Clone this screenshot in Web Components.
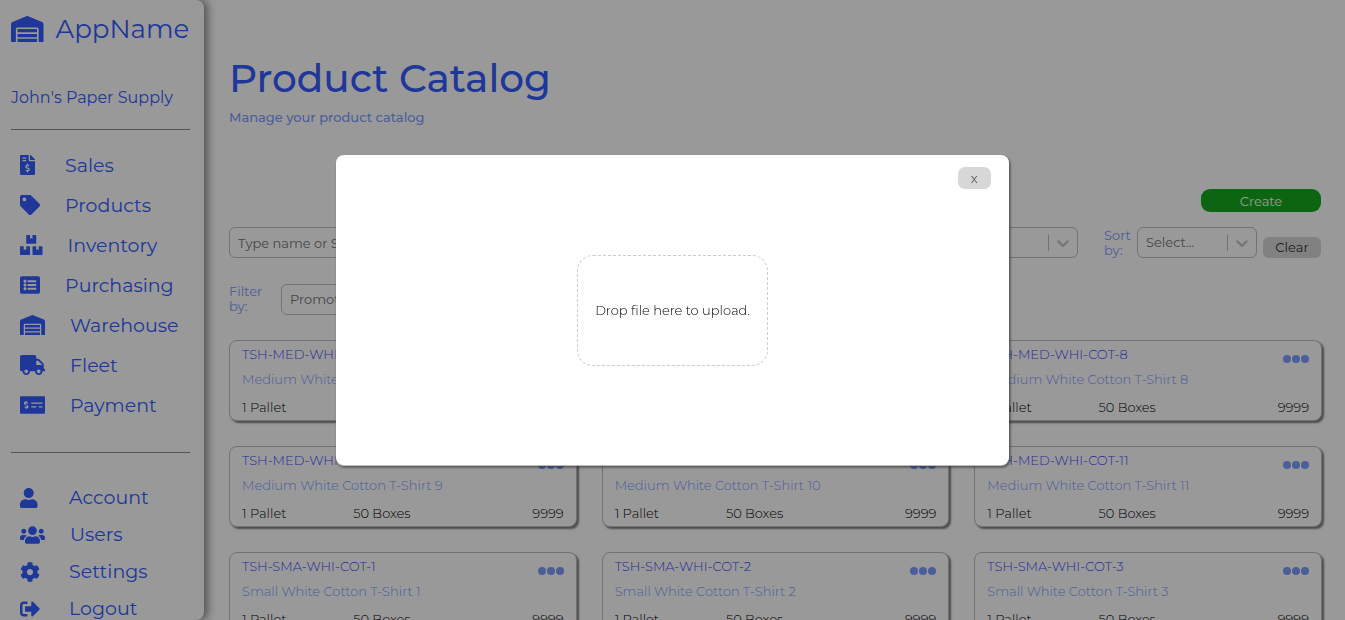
<!DOCTYPE html>
<html lang="en">
<head>
<meta charset="utf-8">
<meta name="viewport" content="width=device-width, initial-scale=1">
<title>Product Catalog</title>
<style>
  :root {
    --blue: #345dff;
    --blue-soft: #7f9dff;
    --link: #4048ff;
  }
  body {
    margin: 0;
    background: #fff;
    color: #000;
    font-family: Montserrat, Inter, "Open Sans", sans-serif;
    font-size: 13px;
    font-weight: 400;
  }
</style>
</head>
<body>
<app-shell>
  <side-bar slot="side" brand="AppName" company="John's Paper Supply">
    <nav-item icon="invoice">Sales</nav-item>
    <nav-item icon="tag">Products</nav-item>
    <nav-item icon="boxes">Inventory</nav-item>
    <nav-item icon="list">Purchasing</nav-item>
    <nav-item icon="warehouse">Warehouse</nav-item>
    <nav-item icon="truck">Fleet</nav-item>
    <nav-item icon="check">Payment</nav-item>
    <nav-item slot="account" icon="user">Account</nav-item>
    <nav-item slot="account" icon="users">Users</nav-item>
    <nav-item slot="account" icon="cog">Settings</nav-item>
    <nav-item slot="account" icon="logout">Logout</nav-item>
  </side-bar>
  <page-title heading="Product Catalog">Manage your product catalog</page-title>
  <catalog-tools></catalog-tools>
  <product-grid></product-grid>
</app-shell>
<upload-modal>Drop file here to upload.</upload-modal>

<script>
const ICONS = {
  user: [448, "M224 256c70.7 0 128-57.3 128-128S294.7 0 224 0 96 57.3 96 128s57.3 128 128 128zm89.6 32h-16.7c-22.2 10.2-46.9 16-72.9 16s-50.6-5.8-72.9-16h-16.7C60.2 288 0 348.2 0 422.4V464c0 26.5 21.5 48 48 48h352c26.5 0 48-21.5 48-48v-41.6c0-74.2-60.2-134.4-134.4-134.4z"],
  users: [640, "M96 224c35.3 0 64-28.7 64-64s-28.7-64-64-64-64 28.7-64 64 28.7 64 64 64zm448 0c35.3 0 64-28.7 64-64s-28.7-64-64-64-64 28.7-64 64 28.7 64 64 64zm32 32h-64c-17.6 0-33.5 7.1-45.1 18.6 40.3 22.1 68.9 62 75.1 109.4h66c17.7 0 32-14.3 32-32v-32c0-35.3-28.7-64-64-64zm-256 0c61.9 0 112-50.1 112-112S381.9 32 320 32 208 82.1 208 144s50.1 112 112 112zm76.8 32h-8.3c-20.8 10-43.9 16-68.5 16s-47.6-6-68.5-16h-8.3C179.6 288 128 339.6 128 403.2V432c0 26.5 21.5 48 48 48h288c26.5 0 48-21.5 48-48v-28.8c0-63.6-51.6-115.2-115.2-115.2zm-223.7-13.4C161.5 263.1 145.6 256 128 256H64c-35.3 0-64 28.7-64 64v32c0 17.7 14.3 32 32 32h65.9c6.3-47.4 34.9-87.3 75.2-109.4z"],
  cog: [512, "M487.4 315.7l-42.6-24.6c4.3-23.2 4.3-47 0-70.2l42.6-24.6c4.9-2.8 7.1-8.6 5.5-14-11.1-35.6-30-67.8-54.7-94.6-3.8-4.1-10-5.1-14.8-2.3L380.8 110c-17.9-15.4-38.5-27.3-60.8-35.1V25.8c0-5.6-3.9-10.5-9.4-11.7-36.7-8.2-74.3-7.8-109.2 0-5.5 1.2-9.4 6.1-9.4 11.7V75c-22.2 7.9-42.8 19.8-60.8 35.1L88.7 85.5c-4.9-2.8-11-1.9-14.8 2.3-24.7 26.7-43.6 58.9-54.7 94.6-1.7 5.4.6 11.2 5.5 14L67.3 221c-4.3 23.2-4.3 47 0 70.2l-42.6 24.6c-4.9 2.8-7.1 8.6-5.5 14 11.1 35.6 30 67.8 54.7 94.6 3.8 4.1 10 5.1 14.8 2.3l42.6-24.6c17.9 15.4 38.5 27.3 60.8 35.1v49.2c0 5.6 3.9 10.5 9.4 11.7 36.7 8.2 74.3 7.8 109.2 0 5.5-1.2 9.4-6.1 9.4-11.7v-49.2c22.2-7.9 42.8-19.8 60.8-35.1l42.6 24.6c4.9 2.8 11 1.9 14.8-2.3 24.7-26.7 43.6-58.9 54.7-94.6 1.5-5.5-.7-11.3-5.6-14.1zM256 336c-44.1 0-80-35.9-80-80s35.9-80 80-80 80 35.9 80 80-35.9 80-80 80z"],
  logout: [512, "M497 273L329 441c-15 15-41 4.5-41-17v-96H152c-13.3 0-24-10.7-24-24v-96c0-13.3 10.7-24 24-24h136V88c0-21.4 25.9-32 41-17l168 168c9.3 9.4 9.3 24.6 0 34zM192 436v-40c0-6.6-5.4-12-12-12H96c-17.7 0-32-14.3-32-32V160c0-17.7 14.3-32 32-32h84c6.6 0 12-5.4 12-12V76c0-6.6-5.4-12-12-12H96c-53 0-96 43-96 96v192c0 53 43 96 96 96h84c6.6 0 12-5.4 12-12z"],
  tag: [512, "M0 252.118V48C0 21.49 21.49 0 48 0h204.118a48 48 0 0 1 33.941 14.059l211.882 211.882c18.745 18.745 18.745 49.137 0 67.882L293.823 497.941c-18.745 18.745-49.137 18.745-67.882 0L14.059 286.059A48 48 0 0 1 0 252.118zM112 64c-26.51 0-48 21.49-48 48s21.49 48 48 48 48-21.49 48-48-21.49-48-48-48z"],
  warehouse: [640, "M504 352H136.4c-4.4 0-8 3.6-8 8l-.1 48c0 4.4 3.6 8 8 8H504c4.4 0 8-3.6 8-8v-48c0-4.4-3.6-8-8-8zm0 96H136.1c-4.4 0-8 3.6-8 8l-.1 48c0 4.4 3.6 8 8 8h368c4.4 0 8-3.6 8-8v-48c0-4.4-3.6-8-8-8zm0-192H136.6c-4.4 0-8 3.6-8 8l-.1 48c0 4.4 3.6 8 8 8H504c4.4 0 8-3.6 8-8v-48c0-4.4-3.6-8-8-8zm106.5-139L338.4 3.7a48.15 48.15 0 0 0-36.9 0L29.5 117C11.7 124.5 0 141.9 0 161.3V504c0 4.4 3.6 8 8 8h80c4.4 0 8-3.6 8-8V256c0-17.6 14.6-32 32.6-32h382.8c18 0 32.6 14.4 32.6 32v248c0 4.4 3.6 8 8 8h80c4.4 0 8-3.6 8-8V161.3c0-19.4-11.7-36.8-29.5-44.3z"],
  truck: [640, "M624 352h-16V243.9c0-12.7-5.1-24.9-14.1-33.9L494 110.1c-9-9-21.2-14.1-33.9-14.1H416V48c0-26.5-21.5-48-48-48H48C21.5 0 0 21.5 0 48v320c0 26.5 21.5 48 48 48h16c0 53 43 96 96 96s96-43 96-96h128c0 53 43 96 96 96s96-43 96-96h48c8.8 0 16-7.2 16-16v-32c0-8.8-7.2-16-16-16zM160 464c-26.5 0-48-21.5-48-48s21.5-48 48-48 48 21.5 48 48-21.5 48-48 48zm320 0c-26.5 0-48-21.5-48-48s21.5-48 48-48 48 21.5 48 48-21.5 48-48 48zm80-208H416V144h44.1l99.9 99.9V256z"],
  boxes: [576, "M560 288h-80v96l-32-21.3-32 21.3v-96h-80c-8.8 0-16 7.2-16 16v192c0 8.8 7.2 16 16 16h224c8.8 0 16-7.2 16-16V304c0-8.8-7.2-16-16-16zm-384-64h224c8.8 0 16-7.2 16-16V16c0-8.8-7.2-16-16-16h-80v96l-32-21.3L256 96V0h-80c-8.8 0-16 7.2-16 16v192c0 8.8 7.2 16 16 16zm64 64h-80v96l-32-21.3L96 384v-96H16c-8.8 0-16 7.2-16 16v192c0 8.8 7.2 16 16 16h224c8.8 0 16-7.2 16-16V304c0-8.8-7.2-16-16-16z"],
  list: [512, "M464 480H48c-26.51 0-48-21.49-48-48V80c0-26.51 21.49-48 48-48h416c26.51 0 48 21.49 48 48v352c0 26.51-21.49 48-48 48zM128 120c-22.091 0-40 17.909-40 40s17.909 40 40 40 40-17.909 40-40-17.909-40-40-40zm0 96c-22.091 0-40 17.909-40 40s17.909 40 40 40 40-17.909 40-40-17.909-40-40-40zm0 96c-22.091 0-40 17.909-40 40s17.909 40 40 40 40-17.909 40-40-17.909-40-40-40zm288-136v-32c0-6.627-5.373-12-12-12H204c-6.627 0-12 5.373-12 12v32c0 6.627 5.373 12 12 12h200c6.627 0 12-5.373 12-12zm0 96v-32c0-6.627-5.373-12-12-12H204c-6.627 0-12 5.373-12 12v32c0 6.627 5.373 12 12 12h200c6.627 0 12-5.373 12-12zm0 96v-32c0-6.627-5.373-12-12-12H204c-6.627 0-12 5.373-12 12v32c0 6.627 5.373 12 12 12h200c6.627 0 12-5.373 12-12z"],
  invoice: [384, "M377 105L279.1 7c-4.5-4.5-10.6-7-17-7H256v128h128v-6.1c0-6.3-2.5-12.4-7-16.9zm-153 31V0H24C10.7 0 0 10.7 0 24v464c0 13.3 10.7 24 24 24h336c13.3 0 24-10.7 24-24V160H248c-13.2 0-24-10.8-24-24zM64 72c0-4.42 3.58-8 8-8h80c4.42 0 8 3.58 8 8v16c0 4.42-3.58 8-8 8H72c-4.42 0-8-3.58-8-8V72zm0 80v-16c0-4.42 3.58-8 8-8h80c4.42 0 8 3.58 8 8v16c0 4.42-3.58 8-8 8H72c-4.42 0-8-3.58-8-8zm144 263.88V440c0 4.42-3.58 8-8 8h-16c-4.42 0-8-3.58-8-8v-24.29c-11.29-.58-22.27-4.52-31.37-11.35-3.9-2.93-4.1-8.77-.57-12.14l11.75-11.21c2.77-2.64 6.89-2.76 10.13-.73 3.87 2.42 8.26 3.72 12.82 3.72h28.11c6.5 0 11.8-5.92 11.8-13.19 0-5.95-3.61-11.19-8.77-12.73l-45-13.5c-18.59-5.58-31.58-23.42-31.58-43.39 0-24.52 19.05-44.44 42.67-45.07V232c0-4.42 3.58-8 8-8h16c4.42 0 8 3.58 8 8v24.29c11.29.58 22.27 4.51 31.37 11.35 3.9 2.93 4.1 8.77.57 12.14l-11.75 11.21c-2.77 2.64-6.89 2.76-10.13.73-3.87-2.43-8.26-3.72-12.82-3.72h-28.11c-6.5 0-11.8 5.92-11.8 13.19 0 5.95 3.61 11.19 8.77 12.73l45 13.5c18.59 5.58 31.58 23.42 31.58 43.39 0 24.53-19.05 44.44-42.67 45.07z"],
  check: [640, "M608 32H32C14.33 32 0 46.33 0 64v384c0 17.67 14.33 32 32 32h576c17.67 0 32-14.33 32-32V64c0-17.67-14.33-32-32-32zM176 327.88V344c0 4.42-3.58 8-8 8h-16c-4.42 0-8-3.58-8-8v-16.29c-11.29-.58-22.27-4.52-31.37-11.35-3.9-2.93-4.1-8.77-.57-12.14l11.75-11.21c2.77-2.64 6.89-2.76 10.13-.73 3.87 2.42 8.26 3.72 12.82 3.72h28.11c6.5 0 11.8-5.92 11.8-13.19 0-5.95-3.61-11.19-8.77-12.73l-45-13.5c-18.59-5.58-31.58-23.42-31.58-43.39 0-24.52 19.05-44.44 42.67-45.07V168c0-4.42 3.58-8 8-8h16c4.42 0 8 3.58 8 8v16.29c11.29.58 22.27 4.51 31.37 11.35 3.9 2.93 4.1 8.77.57 12.14l-11.75 11.21c-2.77 2.64-6.89 2.76-10.13.73-3.87-2.43-8.26-3.72-12.82-3.72h-28.11c-6.5 0-11.8 5.92-11.8 13.19 0 5.95 3.61 11.19 8.77 12.73l45 13.5c18.59 5.58 31.58 23.42 31.58 43.39 0 24.53-19.05 44.44-42.67 45.07zM416 312c0 4.42-3.58 8-8 8H296c-4.42 0-8-3.58-8-8v-16c0-4.42 3.58-8 8-8h112c4.42 0 8 3.58 8 8v16zm160 0c0 4.42-3.58 8-8 8h-80c-4.42 0-8-3.58-8-8v-16c0-4.42 3.58-8 8-8h80c4.42 0 8 3.58 8 8v16zm0-96c0 4.42-3.58 8-8 8H296c-4.42 0-8-3.58-8-8v-16c0-4.42 3.58-8 8-8h272c4.42 0 8 3.58 8 8v16z"]
};
const icon = name => `<svg viewBox="0 0 ${ICONS[name][0]} 512" fill="currentColor" aria-hidden="true"><path d="${ICONS[name][1]}"/></svg>`;
const chevron = `<svg viewBox="0 0 20 20" width="20" height="20" fill="currentColor" aria-hidden="true"><path d="M4.516 7.548c0.436-0.446 1.043-0.481 1.576 0l3.908 3.747 3.908-3.747c0.533-0.481 1.141-0.446 1.574 0 0.436 0.445 0.408 1.197 0 1.615-0.406 0.418-4.695 4.502-4.695 4.502-0.217 0.223-0.502 0.335-0.787 0.335s-0.57-0.112-0.789-0.335c0 0-4.287-4.084-4.695-4.502s-0.436-1.17 0-1.615z"/></svg>`;

class Base extends HTMLElement {
  connectedCallback() {
    if (!this.shadowRoot) this.attachShadow({ mode: "open" }).innerHTML = this.view();
  }
}

customElements.define("app-shell", class extends Base {
  view() {
    return `<style>
      :host { display: grid; grid-template-columns: 204px 1fr; height: 100vh; overflow: hidden; }
      main { padding: 51px 23px 0 25px; min-width: 0; }
    </style>
    <slot name="side"></slot><main><slot></slot></main>`;
  }
});

customElements.define("side-bar", class extends Base {
  view() {
    return `<style>
      :host { display: block; box-sizing: border-box; height: 100vh; padding: 11px 14px 0 11px; color: var(--blue);
        border-radius: 0 8px 8px 0; box-shadow: 3px 0 8px 1px rgba(0, 0, 0, .45); }
      header { display: flex; align-items: center; gap: 12px; height: 35px; font-size: 26px; }
      header svg { display: block; flex: none; height: 26px; }
      p { margin: 41px 0 20px; line-height: 22px; font-size: 16px; white-space: nowrap; }
      hr { margin: 0; border: 0; border-top: 1px solid #8c8c8c; }
      nav { display: grid; --row: 40px; margin: 15px 0 27px; }
      nav.account { --row: 37px; --icon-min: 24px; margin: 26px 0 0; }
    </style>
    <header>${icon("warehouse")}<span>${this.getAttribute("brand")}</span></header>
    <p>${this.getAttribute("company")}</p>
    <hr>
    <nav aria-label="Main"><slot></slot></nav>
    <hr>
    <nav class="account" aria-label="Account"><slot name="account"></slot></nav>`;
  }
});

customElements.define("nav-item", class extends Base {
  view() {
    return `<style>
      :host { display: block; }
      a { display: flex; align-items: center; gap: 25px; height: var(--row); padding-left: 9px;
        color: inherit; text-decoration: none; font-size: 19px; }
      i { display: block; min-width: var(--icon-min, 20px); }
      svg { display: block; height: 20px; }
    </style>
    <a href="#"><i>${icon(this.getAttribute("icon"))}</i><span><slot></slot></span></a>`;
  }
});

customElements.define("page-title", class extends Base {
  view() {
    return `<style>
      :host { display: block; }
      h1 { margin: 0; line-height: 54px; font-size: 39px; font-weight: 500; color: var(--blue); }
      p { margin: 3px 0 0; line-height: 18px; font-weight: 500; color: var(--blue-soft); }
    </style>
    <h1>${this.getAttribute("heading")}</h1><p><slot></slot></p>`;
  }
});

customElements.define("select-box", class extends Base {
  view() {
    const id = this.getAttribute("name"), hint = this.getAttribute("hint");
    const field = this.hasAttribute("editable")
      ? `<input id="${id}" type="text" placeholder="${hint}" aria-label="${hint}">`
      : `<select id="${id}" aria-label="${this.getAttribute("label")}"><option>${hint}</option></select>`;
    return `<style>
      :host { display: flex; box-sizing: border-box; align-items: center; height: 31px; border: 1px solid #bfbfbf; border-radius: 6px; color: #c4c4c4; }
      input, select { flex: 1; min-width: 0; height: 29px; padding: 0 0 0 8px; border: 0; outline: 0; background: none;
        appearance: none; font: inherit; color: #757575; }
      input::placeholder { color: #757575; opacity: 1; }
      hr { width: 1px; height: 16px; margin: 0 4px 0 0; border: 0; background: #bfbfbf; }
      svg { margin-right: 4px; }
    </style>
    ${field}<hr>${chevron}`;
  }
});

customElements.define("catalog-tools", class extends Base {
  view() {
    return `<style>
      :host { display: grid; margin-top: 63px; }
      button { border: 0; padding: 0; font: inherit; cursor: pointer; }
      .create { justify-self: end; width: 120px; height: 23px; margin-right: 1px; border-radius: 9px; background: #14a81b; color: #fff; }
      .row { display: flex; margin: 15px 1px 0 0; color: var(--blue-soft); line-height: 15px; }
      .search { flex: 1; }
      .sort { width: 30px; margin: 1px 3px 0 26px; }
      .order { width: 120px; }
      .clear { align-self: end; width: 58px; height: 21px; margin-left: 6px; border-radius: 6px; background: #d7d7d7; color: #333; }
      .filters { margin-top: 26px; }
      .by { width: 40px; margin: 0 12px 0 0; }
      .promo { width: 240px; }
    </style>
    <button class="create">Create</button>
    <div class="row">
      <select-box class="search" name="search" hint="Type name or SKU" editable></select-box>
      <span class="sort">Sort by:</span>
      <select-box class="order" name="sort" label="Sort by" hint="Select..."></select-box>
      <button class="clear">Clear</button>
    </div>
    <div class="row filters">
      <span class="by">Filter by:</span>
      <select-box class="promo" name="filter" label="Filter by" hint="Promotions"></select-box>
    </div>`;
  }
});

customElements.define("product-card", class extends Base {
  view() {
    return `<style>
      :host { display: block; box-sizing: border-box; height: 81px; padding: 5px 12px 0 12px; border: 1px solid #bfbfbf;
        border-radius: 8px; box-shadow: 2px 2px 2px 0 rgba(0, 0, 0, .5); background: #fff; line-height: 16px; }
      header { display: flex; justify-content: space-between; }
      a { color: var(--link); text-decoration: none; }
      button { display: flex; gap: 1px; height: 8px; margin-top: 9px; padding: 0; border: 0; background: none; color: var(--blue-soft); cursor: pointer; }
      i { width: 8px; height: 8px; border-radius: 50%; background: currentColor; }
      p { margin: 8px 0 12px; color: var(--blue-soft); }
      footer { display: grid; grid-template-columns: repeat(3, 1fr); gap: 12px; }
      footer :last-child { text-align: right; }
    </style>
    <header><a href="#">${this.getAttribute("sku")}</a><button aria-label="More actions"><i></i><i></i><i></i></button></header>
    <p><slot></slot></p>
    <footer><span>1 Pallet</span><span>50 Boxes</span><span>9999</span></footer>`;
  }
});

customElements.define("product-grid", class extends Base {
  view() {
    const items = [["MED", "Medium", 6], ["MED", "Medium", 7], ["MED", "Medium", 8],
      ["MED", "Medium", 9], ["MED", "Medium", 10], ["MED", "Medium", 11],
      ["SMA", "Small", 1], ["SMA", "Small", 2], ["SMA", "Small", 3]];
    return `<style>
      :host { display: grid; grid-template-columns: repeat(3, 1fr); gap: 25px; margin-top: 25px; font-weight: 300; }
    </style>` + items.map(([code, size, n]) =>
      `<product-card sku="TSH-${code}-WHI-COT-${n}">${size} White Cotton T-Shirt ${n}</product-card>`).join("");
  }
});

customElements.define("upload-modal", class extends Base {
  view() {
    return `<style>
      :host { position: fixed; inset: 0; display: grid; place-items: center; background: rgba(0, 0, 0, .4); }
      section { display: grid; box-sizing: border-box; width: 50vw; height: 50vh; padding: 12px 18px; background: #fff;
        border-radius: 8px; box-shadow: 0 1px 1px #ccc, 1px 2px 3px rgba(0, 0, 0, .7); }
      button, label { grid-area: 1 / 1; }
      button { place-self: start end; width: 33px; height: 22px; padding: 0; border: 0; border-radius: 7px; background: #d7d7d7;
        color: #555; font: inherit; cursor: pointer; }
      label { place-self: center; display: grid; place-items: center; box-sizing: border-box; height: 111px; padding: 0 17px;
        border: 1px dashed #ccc; border-radius: 16px; font-weight: 300; }
      input { position: absolute; opacity: 0; width: 1px; height: 1px; }
    </style>
    <section role="dialog" aria-modal="true" aria-label="Upload file">
      <label for="file"><span><slot></slot></span><input id="file" type="file"></label>
      <button aria-label="Close">x</button>
    </section>`;
  }
});
</script>
</body>
</html>
